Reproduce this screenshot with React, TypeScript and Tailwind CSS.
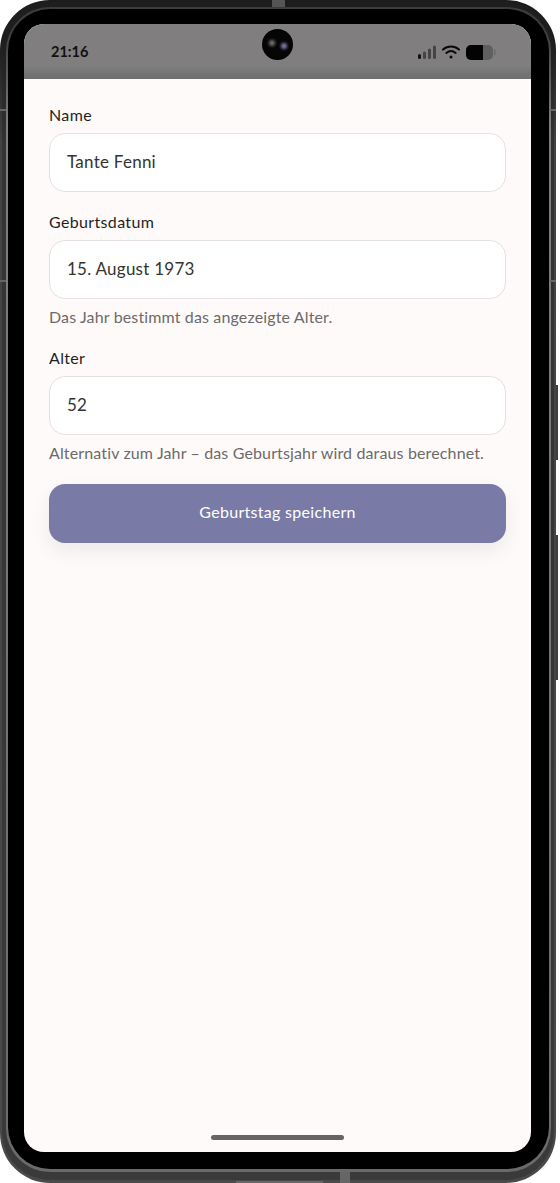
import React from "react";

function Field({ label, value, hint, mt }: { label: string; value: string; hint?: string; mt: string }) {
  return (
    <div className={mt}>
      <div className="h-[24px] text-[16px] leading-[24px] font-normal tracking-[0.35px] text-[#1f1f1f]">{label}</div>
      <div className="mt-[6px] h-[59px] rounded-[16px] border-[1.5px] border-[#e6e0e0] bg-white pl-[17px] pb-[2px] flex items-center text-[17px] tracking-[0.25px] text-[#333333]">{value}</div>
      {hint && <div className="mt-[6px] h-[24px] text-[16px] leading-[24px] tracking-[0.14px] text-[#6b6b6b]">{hint}</div>}
    </div>
  );
}

function StatusIcons() {
  return (
    <div className="flex items-center justify-end gap-[6px] mt-[1px] pr-[35px]">
      <svg width="18" height="14" viewBox="0 0 18 14">
        <rect x="0" y="9" width="3" height="5" rx="1.5" fill="#111" />
        <rect x="5" y="6.5" width="3" height="7.5" rx="1.5" fill="#444" />
        <rect x="10" y="3.5" width="3" height="10.5" rx="1.5" fill="#444" />
        <rect x="15" y="0.5" width="3" height="13.5" rx="1.5" fill="#444" />
      </svg>
      <svg width="18" height="14" viewBox="0 0 18 14" fill="none" stroke="#0a0a0a" strokeWidth="2" strokeLinecap="round">
        <path d="M1 4.6 C5.6 0.6 12.4 0.6 17 4.6" />
        <path d="M4.3 7.9 C7.1 5.6 10.9 5.6 13.7 7.9" />
        <circle cx="9" cy="12" r="1.5" fill="#0a0a0a" stroke="none" />
      </svg>
      <svg width="30" height="15" viewBox="0 0 30 15">
        <rect x="0" y="0" width="27" height="15" rx="5" fill="#5f5f5f" />
        <path d="M5 0 H17 V15 H5 A5 5 0 0 1 0 10 V5 A5 5 0 0 1 5 0 Z" fill="#030303" />
        <rect x="28" y="4.5" width="1.5" height="6" rx="0.75" fill="#6a6a6a" />
      </svg>
    </div>
  );
}

export default function App() {
  return (
    <div className="relative w-[560px] h-[1183px] bg-white font-['Lato','Noto_Sans',sans-serif] overflow-hidden flex">
      <div className="relative w-[556px] h-[1183px] shrink-0 rounded-[50px] bg-gradient-to-b from-[#1c1c1c] from-[3%] via-[#424242] via-[12%] to-[#4a4a4a] pt-[2px] pl-[2px] pr-[2px] pb-[3px]">
        <div className="h-full rounded-[48px] bg-gradient-to-b from-[#1e1e1e] from-[3%] via-[#333333] via-[12%] to-[#3a3a3a] pt-[5px] pl-[4px] pr-[3px] pb-[8px]">
          <div className="h-full rounded-[44px] bg-gradient-to-b from-[#3c3c3c] from-[2%] via-[#7e7e7e] via-[10%] to-[#6a6a6a] pt-[2px] pl-[2px] pr-[2px] pb-[3px]">
            <div className="h-full rounded-[42px] bg-black pt-[15px] pl-[16px] pr-[18px] pb-[17px]">
              <div className="h-[1128px] rounded-[20px] overflow-hidden bg-[#fffafa] flex flex-col">
                <div className="h-[55px] bg-gradient-to-b from-[#807e7e] from-[75%] to-[#6f6f6f] grid grid-cols-[1fr_31px_1fr] items-center shrink-0">
                  <span className="text-[14.5px] font-bold text-[#111111] mt-[1px] pl-[27px]">21:16</span>
                  <div className="self-start mt-[5px] w-[31px] h-[31px] rounded-full bg-[#050505] flex justify-center gap-[6px] pt-[11px]">
                    <div className="w-[6px] h-[6px] rounded-full bg-[#777777] blur-[1.5px]" />
                    <div className="mt-[3px] w-[6px] h-[6px] rounded-full bg-[#8383b0] blur-[1.5px]" />
                  </div>
                  <StatusIcons />
                </div>
                <div className="flex-1 px-[25px] pt-[24px]">
                  <Field mt="" label="Name" value="Tante Fenni" />
                  <Field mt="mt-[18px]" label="Geburtsdatum" value="15. August 1973" hint="Das Jahr bestimmt das angezeigte Alter." />
                  <Field mt="mt-[17px]" label="Alter" value="52" hint="Alternativ zum Jahr – das Geburtsjahr wird daraus berechnet." />
                  <button className="mt-[19px] w-full h-[59px] pb-[3px] rounded-[16px] bg-[#797ba6] text-white text-[16px] font-normal tracking-[0.3px] shadow-[0_8px_20px_rgba(0,0,0,0.07)]">Geburtstag speichern</button>
                </div>
                <div className="flex justify-center pb-[12px]">
                  <div className="w-[133px] h-[5px] rounded-full bg-[#666464]" />
                </div>
              </div>
            </div>
          </div>
        </div>
      </div>
      <div className="w-[2px] flex flex-col pt-[385px] gap-[75px]">
        <div className="h-[75px] bg-[#3f3f3f]" />
        <div className="h-[145px] bg-[#3f3f3f]" />
      </div>
      <div className="absolute left-[272px] top-0 w-[13px] h-[7px] bg-[#555555]" />
      <div className="absolute left-[340px] top-[1172px] w-[10px] h-[11px] bg-[#666666]" />
      <div className="absolute left-[236px] top-[1181px] w-[87px] h-[2px] bg-[#666666]" />
      <div className="absolute left-0 top-[109px] w-[6px] h-[2px] bg-[#666666]" />
      <div className="absolute left-0 top-[280px] w-[6px] h-[2px] bg-[#666666]" />
      <div className="absolute left-[550px] top-[109px] w-[6px] h-[2px] bg-[#666666]" />
      <div className="absolute left-[550px] top-[280px] w-[6px] h-[2px] bg-[#666666]" />
    </div>
  );
}
